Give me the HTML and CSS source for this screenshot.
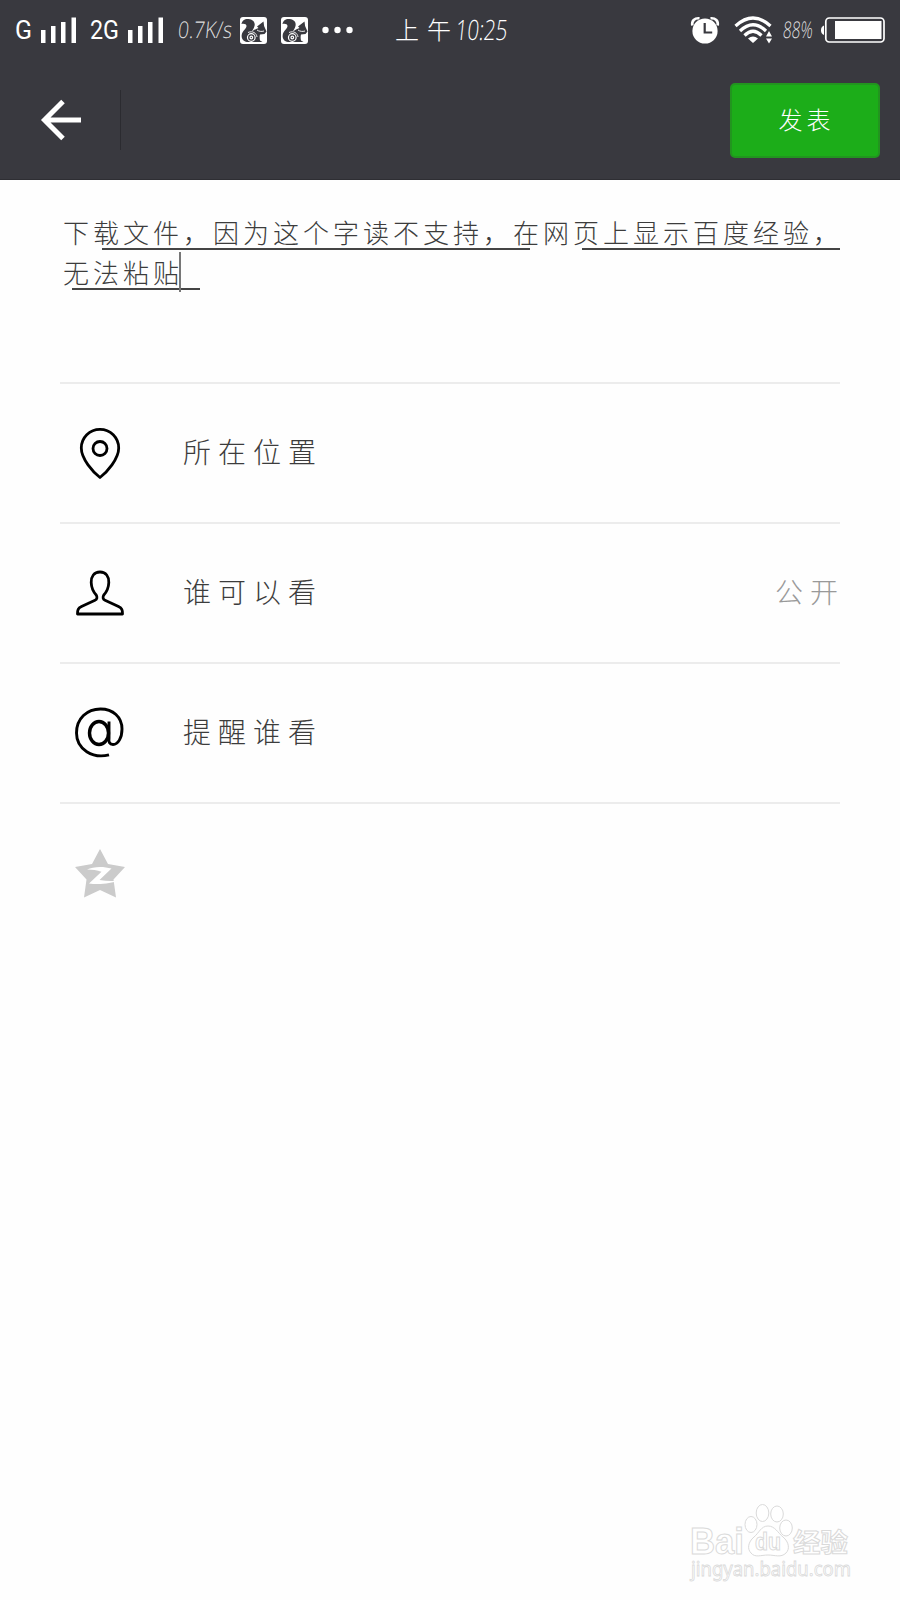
FILE: index.html
```
<!DOCTYPE html>
<html lang="zh-CN">
  <head>
    <meta charset="UTF-8" />
    <title>发表</title>
    <link rel="stylesheet" href="styles.css">
  </head>
  <body>
    <svg class="defs" width="0" height="0">
      <symbol id="bars" viewBox="0 0 35 26">
        <path d="M0 13h4.500v13H0zM10 9h4.500v17H10zM20 5h4.500v21H20zM30.500 0.500h4.500v25.500h-4.500z" fill="#fff" />
      </symbol>
      <symbol id="squirrel" viewBox="0 0 27 27">
        <rect width="27" height="27" rx="3" fill="#fff" />
        <path d="M1.500 7C2 3.500 5 1.600 8.500 2c4.500.4 7 3.500 6 7-.6 2.500-2 4-2.500 5.500 2-1.500 4-2.500 6.500-3.500l-1.500-1.500 6.500-5 .6 4.500 2.400 5.500-2 2.500-4.500.5c-.5 1.500-.5 3.500 0 6l2.500 1.600H7C3.500 24.500 1.200 22 1.700 18 2.200 14 6.500 11.500 6.500 9c0-2-2.500-2.500-5-2z" fill="#39393f" />
        <g fill="none" stroke="#fff">
          <circle cx="11.300" cy="20.500" r="3.800" stroke-width="1.200" />
          <circle cx="11.300" cy="20.500" r="1.300" stroke-width="1.200" />
          <path d="M8 15.500c4.500-2 8.500.5 9 4.500M17 13c2 1.500 4.500 1.800 7 1" stroke-width="0.900" />
        </g>
      </symbol>
    </svg>

    <header class="header">
      <div class="status-bar">
        <svg class="net-g" width="19" height="30"><text x="0" y="24" textLength="17" lengthAdjust="spacingAndGlyphs">G</text></svg>
        <svg class="bars" width="35" height="26"><use href="#bars" /></svg>
        <svg class="net-2g" width="31" height="30"><text x="0" y="24" textLength="29" lengthAdjust="spacingAndGlyphs">2G</text></svg>
        <svg class="bars" width="35" height="26"><use href="#bars" /></svg>
        <svg class="speed" width="56" height="36"><text transform="skewX(-6)" x="2" y="26" textLength="54" lengthAdjust="spacingAndGlyphs">0.7K/s</text></svg>
        <svg class="app" width="27" height="27"><use href="#squirrel" /></svg>
        <svg class="app" width="27" height="27"><use href="#squirrel" /></svg>
        <svg class="more" width="31" height="8" fill="#fff">
          <circle cx="3.500" cy="4" r="3.200" /><circle cx="15.500" cy="4" r="3.200" /><circle cx="27.500" cy="4" r="3.200" />
        </svg>
        <svg class="time" width="114" height="44">
          <text class="time-cn" x="0" y="31">上</text>
          <text class="time-cn" x="32" y="31">午</text>
          <text class="time-num" transform="skewX(-6)" x="63" y="32" textLength="52" lengthAdjust="spacingAndGlyphs">10:25</text>
        </svg>
        <svg class="alarm" width="28" height="27" viewBox="0 0 28 27">
          <circle cx="14" cy="14" r="12.600" fill="#fff" />
          <path d="M1.300 8.500C.5 4 3.500.8 8.500 1.300M26.700 8.500C27.500 4 24.500.8 19.500 1.300" fill="none" stroke="#fff" stroke-width="2.600" />
          <path d="M13.700 6v9.500h7.500" fill="none" stroke="#39393f" stroke-width="2.200" />
        </svg>
        <svg class="wifi" width="39" height="28" viewBox="0 0 39 28">
          <g fill="none" stroke="#fff" stroke-width="3.200">
            <path d="M1.500 10Q19-6 36.500 10" />
            <path d="M6 15Q19 2.500 32 15" />
            <path d="M10.500 19.500Q19 11 27.500 19.500" />
          </g>
          <path d="M14 22.500Q19 18.500 24 22.500L19 27z" fill="#fff" />
          <path d="M32 20.500l3-5.500 3 5.500zM32 22.500l3 5 3-5z" fill="#fff" />
        </svg>
        <svg class="percent" width="33" height="36"><text transform="skewX(-6)" x="3" y="26" textLength="30" lengthAdjust="spacingAndGlyphs">88%</text></svg>
        <svg class="battery" width="64" height="26" viewBox="0 0 64 26">
          <path d="M3 8.500v9.500Q0 17 0 13.300T3 8.500z" fill="#fff" />
          <rect x="4.800" y="1" width="58.200" height="24" rx="3.500" fill="none" stroke="#fff" stroke-width="1.700" />
          <rect x="14" y="4" width="46.500" height="18" fill="#fff" />
        </svg>
      </div>

      <div class="app-bar">
        <svg class="back" width="41" height="40" viewBox="0 0 41 40" fill="none" stroke="#fff" stroke-width="5">
          <path d="M22 1.500L3.500 20 22 38.500M3.500 20H40" />
        </svg>
        <div class="divider"></div>
        <button class="publish">发表</button>
      </div>
    </header>

    <main class="content">
      <div class="editor">
        <p class="line">下载文件，因为这个字读不支持，在网页上显示百度经验，<span class="underline first"></span><span class="underline second"></span></p>
        <p class="line">无法粘贴<span class="underline third"></span><span class="cursor"></span></p>
      </div>

      <ul class="options">
        <li class="option">
          <svg class="icon" width="50" height="54" viewBox="0 0 50 54" fill="none" stroke="#000" stroke-width="2.800">
            <path d="M25 51.500C18 46 6.300 33 6.300 22a18.700 18.700 0 0 1 37.400 0C43.700 33 32 46 25 51.500z" stroke-linejoin="round" />
            <circle cx="25" cy="22.500" r="7" />
          </svg>
          <span class="label">所在位置</span>
        </li>
        <li class="option">
          <svg class="icon" width="50" height="54" viewBox="0 0 50 54" fill="none" stroke="#000" stroke-width="2.800" stroke-linejoin="round">
            <path d="M25 6c-6 0-9 4.500-8.800 10.500.2 5.500 2.300 9.500 5 12.500 1.300 2 1 4.200-1.200 5.200L6.500 40.500c-3.500 1.700-4 3.500-4 7.500h45c0-4-.5-5.800-4-7.500L30 34.200c-2.200-1-2.500-3.200-1.200-5.200 2.700-3 4.800-7 5-12.500C34 10.500 31 6 25 6z" />
          </svg>
          <span class="label">谁可以看</span>
          <span class="value">公开</span>
        </li>
        <li class="option">
          <svg class="icon" width="50" height="54" viewBox="0 0 50 54" fill="none" stroke="#000">
            <path d="M34 48.800C18 53 1.500 43.500 1.500 27 1.500 12.500 12 3 25.500 3 38 3 47 11 47 23c0 9-4 15.500-9 15.500-3.500 0-4.500-2.500-4-6v-17" stroke-width="2.900" />
            <ellipse cx="24" cy="27" rx="9.500" ry="11.500" stroke-width="3.400" />
          </svg>
          <span class="label">提醒谁看</span>
        </li>
      </ul>

      <div class="share">
        <svg width="50" height="49" viewBox="0 0 50 49">
          <path d="M25 0l8 15L50 18 38.500 30.500 41 48.500 25 41 9 48.500l2.500-18L0 18l17-3z" fill="#cbcbcb" />
          <path d="M12 20.500C18 17.500 28 17 36.500 19.500L24.500 31c6.500 1 12.500 1.500 18.500.5C37 34.500 24 36 14 34.500L26.500 22.800c-4.500-1.700-9-2-14.500-2.300z" fill="#fff" />
        </svg>
      </div>
    </main>

    <footer class="watermark">
      <svg width="170" height="94" viewBox="0 -5 170 94" fill="#fff" stroke="#dadada" stroke-width="1">
        <text class="mark-name" x="0" y="47.500" textLength="54" lengthAdjust="spacingAndGlyphs">Bai</text>
        <ellipse cx="61" cy="18.500" rx="6" ry="8" />
        <ellipse cx="72.500" cy="7" rx="6.300" ry="8.500" />
        <ellipse cx="87" cy="8" rx="6.300" ry="8" />
        <ellipse cx="96" cy="22" rx="6.300" ry="8" />
        <path d="M78 20c-7 0-9 7-14 11-6 5-7 12-3 16 4 5 10 2 17 2s13 3 18-2c4-4 3-11-3-16-5-4-8-11-15-11z" />
        <text class="mark-du" x="65" y="44" textLength="26" lengthAdjust="spacingAndGlyphs">du</text>
        <text class="mark-cn" x="103" y="46" textLength="55" lengthAdjust="spacingAndGlyphs">经验</text>
        <text class="mark-url" x="1" y="69.500" textLength="160" lengthAdjust="spacingAndGlyphs">jingyan.baidu.com</text>
      </svg>
    </footer>
  </body>
</html>
```
FILE: styles.css
```
* {
  box-sizing: border-box;
}
body {
  margin: 0;
  width: 900px;
  height: 1600px;
  display: flex;
  flex-direction: column;
  background: #fefefe;
  color: #3c3c3c;
  font-family: "Noto Sans CJK SC", sans-serif;
  font-weight: 300;
  overflow: hidden;
}
svg {
  display: block;
  flex-shrink: 0;
  overflow: visible;
}
.defs {
  position: absolute;
}
.header {
  height: 180px;
  background: #39393f;
  border-bottom: 1px solid #2e2e33;
}

/* status bar */
.status-bar {
  height: 60px;
  padding: 0 15px;
  display: flex;
  align-items: center;
}
.status-bar text {
  fill: #fff;
}
.net-g text,
.net-2g text {
  font: 26px Roboto, sans-serif;
}
.net-g {
  margin-right: 7px;
}
.net-2g {
  margin: 0 7px 0 14px;
}
.speed {
  margin: 0 6px 0 15px;
}
.speed text,
.percent text {
  font: 300 23px "Open Sans", sans-serif;
  fill: #ddd;
}
.app {
  margin-right: 14px;
}
.time {
  margin-left: 42px;
}
.time-cn {
  font-size: 24px;
}
.time-num {
  font: 300 28px "Open Sans", sans-serif;
}
.alarm {
  margin-left: auto;
}
.wifi {
  margin-left: 15px;
}
.percent {
  margin: 0 6px 0 9px;
}

/* app bar */
.app-bar {
  height: 120px;
  padding: 0 20px 0 41px;
  display: flex;
  align-items: center;
}
.divider {
  width: 1px;
  height: 60px;
  margin-left: 38px;
  background: #2b2b30;
}
.publish {
  width: 150px;
  height: 75px;
  margin-left: auto;
  padding: 0 0 3px 3px;
  background: #1cad19;
  border: 2px solid #22951f;
  border-radius: 5px;
  color: #fff;
  font: 300 24px "Noto Sans CJK SC", sans-serif;
  letter-spacing: 4px;
}

/* editor */
.content {
  padding: 0 60px;
}
.editor {
  height: 202px;
  padding-top: 32px;
}
.line {
  position: relative;
  margin: 0;
  padding-left: 3px;
  height: 40px;
  line-height: 40px;
  font-size: 26px;
  letter-spacing: 4px;
  white-space: nowrap;
}
.underline {
  position: absolute;
  top: 36px;
  height: 2px;
  background: #444;
}
.first {
  left: 42px;
  width: 428px;
}
.second {
  left: 522px;
  width: 258px;
}
.third {
  left: 12px;
  width: 128px;
}
.cursor {
  position: absolute;
  top: 0;
  left: 119px;
  width: 2px;
  height: 40px;
  background: #777;
}

/* options */
.options {
  margin: 0;
  padding: 0;
  list-style: none;
  border-bottom: 2px solid #ececec;
}
.option {
  height: 140px;
  padding-left: 15px;
  display: flex;
  align-items: center;
  border-top: 2px solid #ececec;
}
.label,
.value {
  font-size: 28px;
  line-height: 40px;
  letter-spacing: 7px;
  padding-bottom: 4px;
}
.label {
  margin-left: 58px;
}
.value {
  margin: 0 -5px 0 auto;
  color: #999;
}
.share {
  padding: 45px 15px;
}

/* watermark */
.watermark {
  margin-top: auto;
  padding: 0 40px 5px 0;
  display: flex;
  justify-content: flex-end;
}
.mark-name {
  font: 700 36px "Liberation Sans", sans-serif;
}
.mark-du {
  font: 700 23px "Liberation Sans", sans-serif;
}
.mark-cn {
  font: 700 26px "Noto Sans CJK SC", sans-serif;
}
.mark-url {
  font: 19px "Noto Sans", sans-serif;
  stroke-width: 0.8px;
}
```
